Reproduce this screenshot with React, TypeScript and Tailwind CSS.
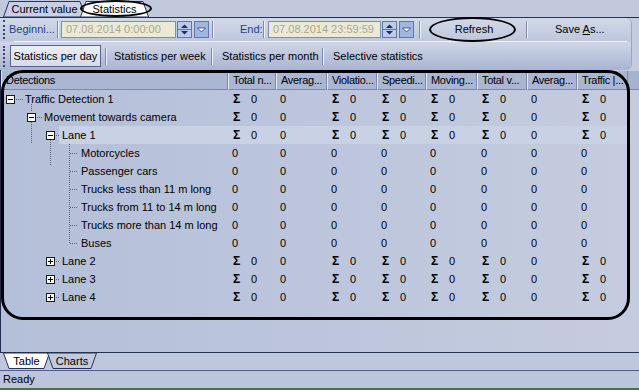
import React from "react";

const GRID = "grid grid-cols-[227px_48px_51px_50px_49px_51px_50px_50px_51px]";

const HEADERS = [
  "Detections",
  "Total n...",
  "Averag...",
  "Violatio...",
  "Speedi...",
  "Moving...",
  "Total v...",
  "Averag...",
  "Traffic |...",
];

// s = sigma + 0, z = plain 0
const SUM_ROW = ["s", "z", "s", "s", "s", "s", "z", "s"];
const ZERO_ROW = ["z", "z", "z", "z", "z", "z", "z", "z"];

type TreeRow = {
  label: string;
  box?: "minus" | "plus";
  indent: string;
  gap: string;
  cells: string[];
  selected?: boolean;
};

const ROWS: TreeRow[] = [
  { label: "Traffic Detection 1", box: "minus", indent: "pl-[5px]", gap: "ml-[10px]", cells: SUM_ROW },
  { label: "Movement towards camera", box: "minus", indent: "pl-[26px]", gap: "ml-[8px]", cells: SUM_ROW },
  { label: "Lane 1", box: "minus", indent: "pl-[45px]", gap: "ml-[4px] pl-[3px]", cells: SUM_ROW, selected: true },
  { label: "Motorcycles", indent: "pl-[80px]", gap: "", cells: ZERO_ROW },
  { label: "Passenger cars", indent: "pl-[80px]", gap: "", cells: ZERO_ROW },
  { label: "Trucks less than 11 m long", indent: "pl-[80px]", gap: "", cells: ZERO_ROW },
  { label: "Trucks from 11 to 14 m long", indent: "pl-[80px]", gap: "", cells: ZERO_ROW },
  { label: "Trucks more than 14 m long", indent: "pl-[80px]", gap: "", cells: ZERO_ROW },
  { label: "Buses", indent: "pl-[80px]", gap: "", cells: ZERO_ROW },
  { label: "Lane 2", box: "plus", indent: "pl-[45px]", gap: "ml-[7px]", cells: SUM_ROW },
  { label: "Lane 3", box: "plus", indent: "pl-[45px]", gap: "ml-[7px]", cells: SUM_ROW },
  { label: "Lane 4", box: "plus", indent: "pl-[45px]", gap: "ml-[7px]", cells: SUM_ROW },
];

function ExpandBox({ kind }: { kind: "minus" | "plus" }) {
  return (
    <svg width="9" height="9" viewBox="0 0 9 9" className="shrink-0">
      <rect x="0.5" y="0.5" width="8" height="8" fill="#fff" stroke="#1a1a1a" />
      <line x1="2" y1="4.5" x2="7" y2="4.5" stroke="#000" />
      {kind === "plus" && <line x1="4.5" y1="2" x2="4.5" y2="7" stroke="#000" />}
    </svg>
  );
}

function TopTab({ label, w, active, className }: { label: string; w: number; active?: boolean; className: string }) {
  return (
    <div className={`relative h-[16px] flex items-center justify-center ${className}`}>
      <svg className="absolute inset-0" width="100%" height="100%" viewBox={`0 0 ${w} 16`} preserveAspectRatio="none">
        <polygon
          points={`0.5,16 6,0.5 ${w - 6},0.5 ${w - 0.5},16`}
          fill={active ? "#ffffff" : "#c9d0e3"}
          stroke="#26345a"
          vectorEffect="non-scaling-stroke"
        />
      </svg>
      <span className="relative">{label}</span>
    </div>
  );
}

function BottomTab({ label, w, active, className }: { label: string; w: number; active?: boolean; className: string }) {
  return (
    <div className={`relative h-[16px] flex items-center justify-center ${className}`}>
      <svg className="absolute inset-0" width="100%" height="100%" viewBox={`0 0 ${w} 16`} preserveAspectRatio="none">
        <polygon
          points={`0.5,0 6,15.5 ${w - 6},15.5 ${w - 0.5},0`}
          fill={active ? "#ffffff" : "#c3cadf"}
          stroke="#26345a"
          vectorEffect="non-scaling-stroke"
        />
      </svg>
      <span className="relative">{label}</span>
    </div>
  );
}

function Sep({ className = "" }: { className?: string }) {
  return <span className={`w-[2px] h-[17px] border-l border-[#7d89aa] border-r border-r-[#eef1f8] shrink-0 ${className}`} />;
}

function Grip({ className }: { className: string }) {
  return <span className={`w-[2px] border-l-2 border-dotted border-[#34477a] shrink-0 ${className}`} />;
}

function Spin() {
  return (
    <svg width="15" height="17" viewBox="0 0 15 17" className="shrink-0">
      <rect x="0.5" y="0.5" width="14" height="16" fill="#bccbe9" stroke="#5f78aa" />
      <polygon points="4,7 7.5,3.5 11,7" fill="#1d2d58" />
      <line x1="1" y1="8.5" x2="14" y2="8.5" stroke="#5f78aa" />
      <polygon points="4,10 11,10 7.5,13.5" fill="#1d2d58" />
    </svg>
  );
}

function Drop() {
  return (
    <svg width="15" height="17" viewBox="0 0 15 17" className="shrink-0">
      <rect x="0.5" y="0.5" width="14" height="16" fill="#9fb6e0" stroke="#5f78aa" />
      <polygon points="3.5,7 11.5,7 7.5,11" fill="#ffffff" stroke="#2c3d6c" strokeWidth="0.8" />
    </svg>
  );
}

function DateBox({ value, className }: { value: string; className: string }) {
  return (
    <div className={`h-[17px] border border-[#7f8db0] bg-[#ece9d8] text-[#aaa690] flex items-center pl-[4px] shrink-0 ${className}`}>
      {value}
    </div>
  );
}

function Cell({ kind, selected }: { kind: string; selected?: boolean }) {
  const bg = selected ? "bg-[#c9d1e5]" : "";
  if (kind === "s") {
    return (
      <div className={`flex items-center pl-[5px] ${bg}`}>
        <span className="font-bold text-[12px] w-[9px]">Σ</span>
        <span className="ml-[9px]">0</span>
      </div>
    );
  }
  return <div className={`flex items-center pl-[4px] ${bg}`}>0</div>;
}

function TreeLines() {
  const d = { stroke: "#5b6684", strokeDasharray: "1 1" };
  return (
    <svg className="absolute left-0 top-0 pointer-events-none" width="227" height="216">
      <line x1="15" y1="9.5" x2="22" y2="9.5" {...d} />
      <line x1="30.5" y1="14" x2="30.5" y2="22" {...d} />
      <line x1="36" y1="27.5" x2="41" y2="27.5" {...d} />
      <line x1="30.5" y1="32" x2="30.5" y2="54" {...d} />
      <line x1="55" y1="45.5" x2="58" y2="45.5" {...d} />
      <line x1="49.5" y1="50" x2="49.5" y2="76" {...d} />
      <line x1="68.5" y1="54" x2="68.5" y2="153" {...d} />
      {[63, 81, 99, 117, 135, 153].map((y) => (
        <line key={y} x1="69" y1={y + 0.5} x2="77" y2={y + 0.5} {...d} />
      ))}
      {[171, 189, 207].map((y) => (
        <line key={y} x1="55" y1={y + 0.5} x2="59" y2={y + 0.5} {...d} />
      ))}
    </svg>
  );
}

export default function App() {
  return (
    <div className="w-[639px] h-[390px] overflow-hidden relative flex flex-col bg-[#c5cce0] text-black text-[11px] leading-none font-['Liberation_Sans',Arial,sans-serif]">
      {/* top tabs */}
      <div className="h-[18px] flex items-end border-b border-[#24314f] bg-[#c2c9dd] shrink-0">
        <TopTab label="Current value" w={83} className="w-[83px] ml-[3px]" />
        <TopTab label="Statistics" w={69} active className="w-[69px] -ml-[6px]" />
      </div>

      {/* toolbars */}
      <div className="h-[52px] w-[632px] flex flex-col rounded-r-[6px] overflow-hidden shrink-0 border-r border-[#9aa5c2]">
        <div className="h-[23px] flex items-center bg-gradient-to-b from-[#d2d8e8] to-[#bec7dd]">
          <Grip className="ml-[3px] h-[19px]" />
          <span className="ml-[4px] w-[48px] text-[#1f3e8c]">Beginni...</span>
          <Sep />
          <DateBox value="07.08.2014 0:00:00" className="ml-[2px] w-[115px]" />
          <span className="ml-[1px]"><Spin /></span>
          <span className="ml-[2px]"><Drop /></span>
          <Sep className="ml-[3px]" />
          <span className="ml-[26px] w-[23px] text-[#1f3e8c]">End:</span>
          <Sep />
          <DateBox value="07.08.2014 23:59:59" className="ml-[3px] w-[113px]" />
          <span className="ml-[1px]"><Spin /></span>
          <span className="ml-[2px]"><Drop /></span>
          <Sep className="ml-[5px]" />
          <span className="ml-[10px] w-[86px] text-center">Refresh</span>
          <Sep className="ml-[9px]" />
          <span className="ml-[27px]">
            Save <span className="underline">A</span>s...
          </span>
        </div>
        <div className="h-[1px] ml-[14px] mr-[4px] bg-[#f3f5fa]" />
        <div className="flex-1 flex items-center bg-gradient-to-b from-[#d0d6e7] to-[#a9b4d0]">
          <Grip className="ml-[3px] h-[21px]" />
          <span className="ml-[5px] w-[91px] h-[22px] flex items-center justify-center border border-[#56658c] bg-gradient-to-b from-[#eceef5] to-[#d6dbe8]">
            Statistics per day
          </span>
          <Sep className="ml-[4px]" />
          <span className="ml-[7px] w-[97px]">Statistics per week</span>
          <Sep />
          <span className="ml-[9px] w-[100px]">Statistics per month</span>
          <Sep />
          <span className="ml-[9px]">Selective statistics</span>
        </div>
      </div>

      {/* table */}
      <div className="flex-1 relative border-l border-[#1e2b4c] bg-gradient-to-r from-[#b4bfd9] to-[#c5ccdf] pt-[1px]">
        <div className="flex h-[19px]">
          <div className={`${GRID} bg-[#abb6d2]`}>
            {HEADERS.map((h, i) => (
              <div
                key={i}
                className="flex items-center pl-[4px] tracking-[-0.3px] whitespace-nowrap overflow-hidden border-l border-[#e3e7f1] border-r border-r-[#7d89ab] border-b border-b-[#7d89ab]"
              >
                {h}
              </div>
            ))}
          </div>
          <div className="flex-1 bg-[#a7b2ce] border-b border-[#7d89ab]" />
        </div>

        <div className="relative">
          <TreeLines />
          {ROWS.map((r, i) => (
            <div key={i} className={`${GRID} h-[18px] w-[627px]`}>
              <div className={`flex items-center ${r.indent}`}>
                {r.box && <ExpandBox kind={r.box} />}
                <span className={`h-full flex items-center flex-1 whitespace-nowrap ${r.gap} ${r.selected ? "bg-[#c9d1e5]" : ""}`}>
                  {r.label}
                </span>
              </div>
              {r.cells.map((c, j) => (
                <Cell key={j} kind={c} selected={r.selected} />
              ))}
            </div>
          ))}
        </div>
      </div>

      {/* bottom tabs */}
      <div className="h-[18px] flex items-start border-t border-[#24314f] shrink-0 bg-[#bfc7dc]">
        <BottomTab label="Table" w={47} active className="w-[47px] ml-[3px]" />
        <BottomTab label="Charts" w={50} className="w-[50px] -ml-[3px]" />
      </div>

      {/* status bar */}
      <div className="h-[18px] flex items-center pl-[3px] border-t border-[#4d6190] bg-[#bcc5dc] shrink-0">Ready</div>
      <div className="h-[2px] bg-[#3f7a3c] shrink-0" />

      {/* hand drawn annotations */}
      <div className="absolute left-[80px] top-0 w-[72px] h-[17px] border-[2.5px] border-black rounded-[50%]" />
      <div className="absolute left-[429px] top-[17px] w-[87px] h-[25px] border-[2.5px] border-black rounded-[50%]" />
      <div className="absolute left-[1px] top-[70px] w-[629px] h-[250px] border-[3px] border-black rounded-[22px]" />
    </div>
  );
}
